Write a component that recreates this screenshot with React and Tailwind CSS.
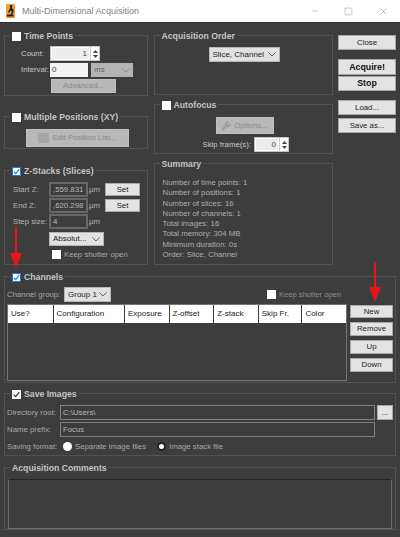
import { Minus, Square, X, Wrench } from 'lucide-react';

const Chevron = ({ color = '#555' }) => (
    <svg width="8" height="5" viewBox="0 0 8 5" fill="none" stroke={color} strokeWidth="0.9">
        <path d="M0.5 0.5 L4 4 L7.5 0.5" />
    </svg>
);

const Check = ({ on, dark, className = '' }) => (
    <span className={`flex h-[9px] w-[9px] shrink-0 items-center justify-center bg-white ${on && !dark ? 'border border-[#1f78d1]' : ''} ${className}`}>
        {on && (
            <svg width="7" height="7" viewBox="0 0 7 7" fill="none" stroke={dark ? '#333' : '#1f78d1'} strokeWidth="1.2">
                <path d="M0.7 3.6 L2.7 5.6 L6.3 1" />
            </svg>
        )}
    </span>
);

// group box with its title sitting on the top border
const Panel = ({ title, check, checked, dark, className = '', children }) => (
    <div className={`relative border border-[#535353] ${className}`}>
        <div className="absolute left-[5px] top-[-6px] flex h-[12px] items-center gap-[3px] whitespace-nowrap bg-[#3d3d3d] px-[2px] text-[8.7px] font-bold leading-none text-[#c4c4c4]">
            {check && <Check on={checked} dark={dark} />}
            <span>{title}</span>
        </div>
        {children}
    </div>
);

const Btn = ({ disabled, big, className = '', children }) => {
    const look = disabled
        ? 'border-[#c0c0c0] bg-[#b8b8b8] text-[#8a8a8a] text-[7.8px]'
        : big
            ? 'border-[#a8a8a8] bg-[#e3e3e3] text-[#111] text-[8.8px] font-bold'
            : 'border-[#a8a8a8] bg-[#e3e3e3] text-[#222] text-[7.8px]';
    return (
        <div className={`flex items-center justify-center whitespace-nowrap border leading-none ${look} ${className}`}>
            {children}
        </div>
    );
};

const Select = ({ label, className = '' }) => (
    <div className={`flex items-center justify-between whitespace-nowrap border border-[#b5b5b5] bg-[#e1e1e1] px-[3px] text-[8px] leading-none text-[#222] ${className}`}>
        <span>{label}</span>
        <Chevron />
    </div>
);

const Spinner = ({ value, className = '' }) => (
    <div className={`flex items-stretch border border-[#c4c4c4] bg-white ${className}`}>
        <div className="m-px flex flex-1 items-center justify-end bg-[#ededed] pr-[2px] text-[8px] leading-none text-[#444]">{value}</div>
        <div className="flex w-[9px] flex-col items-center justify-center gap-[2px] border-l border-[#ccc]">
            <svg width="5" height="3" viewBox="0 0 5 3" fill="#444"><path d="M2.5 0 L5 3 L0 3 Z" /></svg>
            <svg width="5" height="3" viewBox="0 0 5 3" fill="#444"><path d="M0 0 L5 0 L2.5 3 Z" /></svg>
        </div>
    </div>
);

const ZRow = ({ label, value, set, className = '' }) => (
    <div className={`flex items-center whitespace-nowrap ${className}`}>
        <span className="w-[36px] text-[7.8px] leading-none text-[#b4b4b4]">{label}</span>
        <div className="flex h-[15px] w-[39px] items-center border-2 border-[#686868] pl-[2px] text-[7.8px] leading-none text-[#b8b8b8]">{value}</div>
        <span className="ml-px w-[16px] text-[7.8px] leading-none text-[#b4b4b4]">µm</span>
        {set && <Btn className="h-[13px] w-[35px]">Set</Btn>}
    </div>
);

const Radio = ({ on }) => (
    <span className={`h-[9px] w-[9px] shrink-0 rounded-full bg-white ${on ? 'border-2 border-[#222]' : ''}`} />
);

const Arrow = ({ className, height }) => (
    <svg className={`absolute ${className}`} width="12" height={height} viewBox={`0 0 12 ${height}`} fill="#e8141c">
        <path d={`M5 0 H7 V${height - 15} H12 L6 ${height} L0 ${height - 15} H5 Z`} />
    </svg>
);

const columns = [
    ['Use?', 'w-[45px]'],
    ['Configuration', 'w-[71px]'],
    ['Exposure', 'w-[44px]'],
    ['Z-offset', 'w-[44px]'],
    ['Z-stack', 'w-[44px]'],
    ['Skip Fr.', 'w-[43px]'],
    ['Color', 'w-[44px]'],
];

const summary = [
    'Number of time points: 1',
    'Number of positions: 1',
    'Number of slices: 16',
    'Number of channels: 1',
    'Total images: 16',
    'Total memory: 304 MB',
    'Minimum duration: 0s',
    'Order: Slice, Channel',
];

export default function App() {
    return (
        <div className="relative h-[537px] w-[400px] overflow-hidden bg-[#3d3d3d] font-['Liberation_Sans',sans-serif]">
            {/* Title bar */}
            <div className="flex h-[23px] items-center border-b border-[#2c2c2c] bg-white pl-[6px]">
                <svg width="9" height="14" viewBox="0 0 9 14">
                    <rect x="0" y="0" width="9" height="14" fill="#f0a030" />
                    <path d="M4 1 L6 1 L6 4 L7.5 6 C8 8 7 10 5.5 10.5 L7.5 10.5 L7.5 12.5 L1 12.5 L1 10.5 L4 10.5 C5.5 10 6 8 5.5 7 L4 7 L3 9 L2 8 L4 4 Z" fill="#222" />
                </svg>
                <span className="ml-[7px] text-[9px] leading-none text-[#808080]">Multi-Dimensional Acquisition</span>
                <div className="ml-auto flex items-center text-[#7a7a7a]">
                    <Minus size={10} strokeWidth={1} className="mr-[24px]" />
                    <Square size={9} strokeWidth={1} className="mr-[25px]" />
                    <X size={11} strokeWidth={1} className="mr-[11px]" />
                </div>
            </div>

            <div className="pl-[4px] pr-[4px] pt-[12px]">
                <div className="grid grid-cols-[144px_179px_58px] gap-x-[5.5px]">
                    {/* Left column */}
                    <div className="flex flex-col">
                        <Panel title="Time Points" check className="h-[61px]">
                            <div className="ml-[16px] mt-[10px] flex items-center whitespace-nowrap">
                                <span className="w-[29px] text-[7.8px] leading-none text-[#c8c8c8]">Count:</span>
                                <Spinner value="1" className="h-[15px] w-[50px]" />
                            </div>
                            <div className="ml-[16px] mt-[2px] flex items-center whitespace-nowrap">
                                <span className="w-[29px] text-[7.8px] leading-none text-[#c8c8c8]">Interval:</span>
                                <div className="flex h-[14px] w-[38px] items-center bg-[#f2f2f2] pl-[2px] text-[8px] leading-none text-[#444]">0</div>
                                <div className="ml-[3px] flex h-[14px] w-[42px] items-center justify-between bg-[#b4b4b4] px-[3px] text-[8px] leading-none text-[#666]">
                                    <span>ms</span>
                                    <Chevron color="#8a8a8a" />
                                </div>
                            </div>
                            <Btn disabled className="ml-[46px] mt-[2px] h-[14px] w-[65px]">Advanced...</Btn>
                        </Panel>

                        <Panel title="Multiple Positions (XY)" check className="mt-[20px] h-[33px]">
                            <Btn disabled className="ml-[21px] mt-[12px] h-[18px] w-[103px] gap-[3px]">
                                <span className="h-[10px] w-[11px] bg-[#a6a6a6]" />
                                Edit Position List...
                            </Btn>
                        </Panel>

                        <Panel title="Z-Stacks (Slices)" check checked className="mt-[21px] h-[95px]">
                            <div className="ml-[8px] mt-[11px] flex flex-col">
                                <ZRow label="Start Z:" value=",559.831" set />
                                <ZRow label="End Z:" value=",620.298" set className="mt-px" />
                                <ZRow label="Step size:" value="4" className="mt-px" />
                            </div>
                            <Select label="Absolut..." className="ml-[44px] mt-[3px] h-[14px] w-[55px]" />
                            <div className="ml-[47px] mt-[4px] flex items-center gap-[3px] whitespace-nowrap">
                                <Check />
                                <span className="text-[7.8px] leading-none text-[#a8a8a8]">Keep shutter open</span>
                            </div>
                        </Panel>
                    </div>

                    {/* Middle column */}
                    <div className="flex h-[230px] flex-col">
                        <Panel title="Acquisition Order" className="h-[60px]">
                            <Select label="Slice, Channel" className="ml-[54px] mt-[11px] h-[15px] w-[71px]" />
                        </Panel>
                        <Panel title="Autofocus" check className="mt-[9px] h-[50px]">
                            <Btn disabled className="ml-[61px] mt-[12px] h-[17px] w-[58px] gap-[3px]">
                                <Wrench size={10} fill="#a0a0a0" stroke="#a0a0a0" />
                                Options...
                            </Btn>
                            <div className="ml-[48px] mt-[3px] flex items-center gap-[3px] whitespace-nowrap">
                                <span className="text-[7.8px] leading-none text-[#c8c8c8]">Skip frame(s):</span>
                                <Spinner value="0" className="h-[15px] w-[35px]" />
                            </div>
                        </Panel>
                        <Panel title="Summary" className="mt-[9px] flex-1">
                            <div className="ml-[8px] mt-[14px] flex flex-col whitespace-nowrap text-[7.8px] leading-[10.3px] text-[#aeaeae]">
                                {summary.map((line) => (
                                    <span key={line}>{line}</span>
                                ))}
                            </div>
                        </Panel>
                    </div>

                    {/* Buttons */}
                    <div className="flex flex-col">
                        <Btn className="h-[15px]">Close</Btn>
                        <Btn big className="mt-[9px] h-[16px]">Acquire!</Btn>
                        <Btn big className="mt-[1px] h-[15px]">Stop</Btn>
                        <Btn className="mt-[9px] h-[15px]">Load...</Btn>
                        <Btn className="mt-[3px] h-[15px]">Save as...</Btn>
                    </div>
                </div>

                <Panel title="Channels" check checked className="mt-[11px] h-[107px]">
                    <div className="ml-[2px] mt-[10px] flex h-[15px] items-center whitespace-nowrap">
                        <span className="w-[57px] text-[7.8px] leading-none text-[#a8a8a8]">Channel group:</span>
                        <Select label="Group 1" className="h-[15px] w-[47px]" />
                        <Check className="ml-[156px]" />
                        <span className="ml-[3px] text-[7.6px] leading-none text-[#8e8e8e]">Keep shutter open</span>
                    </div>
                    <div className="ml-[2px] mt-[2px] flex">
                        <div className="h-[77px] w-[340px] border border-[#747474]">
                            <div className="flex gap-px">
                                {columns.map(([name, width]) => (
                                    <div key={name} className={`flex h-[18px] items-center bg-white pl-[3px] text-[8px] leading-none text-[#222] ${width}`}>
                                        {name}
                                    </div>
                                ))}
                            </div>
                        </div>
                        <div className="ml-[3px] flex w-[43px] flex-col gap-[4px] pt-[1px]">
                            <Btn className="h-[13px]">New</Btn>
                            <Btn className="h-[14px]">Remove</Btn>
                            <Btn className="h-[14px]">Up</Btn>
                            <Btn className="h-[14px]">Down</Btn>
                        </div>
                    </div>
                </Panel>

                <Panel title="Save Images" check checked dark className="mt-[10px] h-[63px]">
                    <div className="ml-[2px] mt-[11px] flex h-[15px] items-center whitespace-nowrap">
                        <span className="w-[53px] text-[7.8px] leading-none text-[#a8a8a8]">Directory root:</span>
                        <div className="flex h-[15px] w-[315px] items-center border border-[#808080] pl-[2px] text-[7.8px] leading-none text-[#b8b8b8]">C:\Users\</div>
                        <Btn className="ml-[2px] h-[15px] w-[16px]">...</Btn>
                    </div>
                    <div className="ml-[2px] mt-[2px] flex h-[15px] items-center whitespace-nowrap">
                        <span className="w-[53px] text-[7.8px] leading-none text-[#a8a8a8]">Name prefix:</span>
                        <div className="flex h-[15px] w-[315px] items-center border border-[#808080] pl-[2px] text-[7.8px] leading-none text-[#b8b8b8]">Focus</div>
                    </div>
                    <div className="ml-[2px] mt-[5px] flex items-center whitespace-nowrap text-[7.8px] leading-none text-[#a8a8a8]">
                        <span className="w-[56px]">Saving format:</span>
                        <Radio />
                        <span className="ml-[3px] w-[82px]">Separate image files</span>
                        <Radio on />
                        <span className="ml-[3px]">Image stack file</span>
                    </div>
                </Panel>

                <Panel title="Acquisition Comments" className="mt-[11px] h-[63px]">
                    <div className="mx-[3px] mt-[11px] h-[50px] border border-[#6e6e6e] border-t-[#262626]" />
                </Panel>
            </div>

            <Arrow className="left-[10px] top-[227px]" height={41} />
            <Arrow className="left-[369px] top-[262px]" height={40} />
        </div>
    );
}
